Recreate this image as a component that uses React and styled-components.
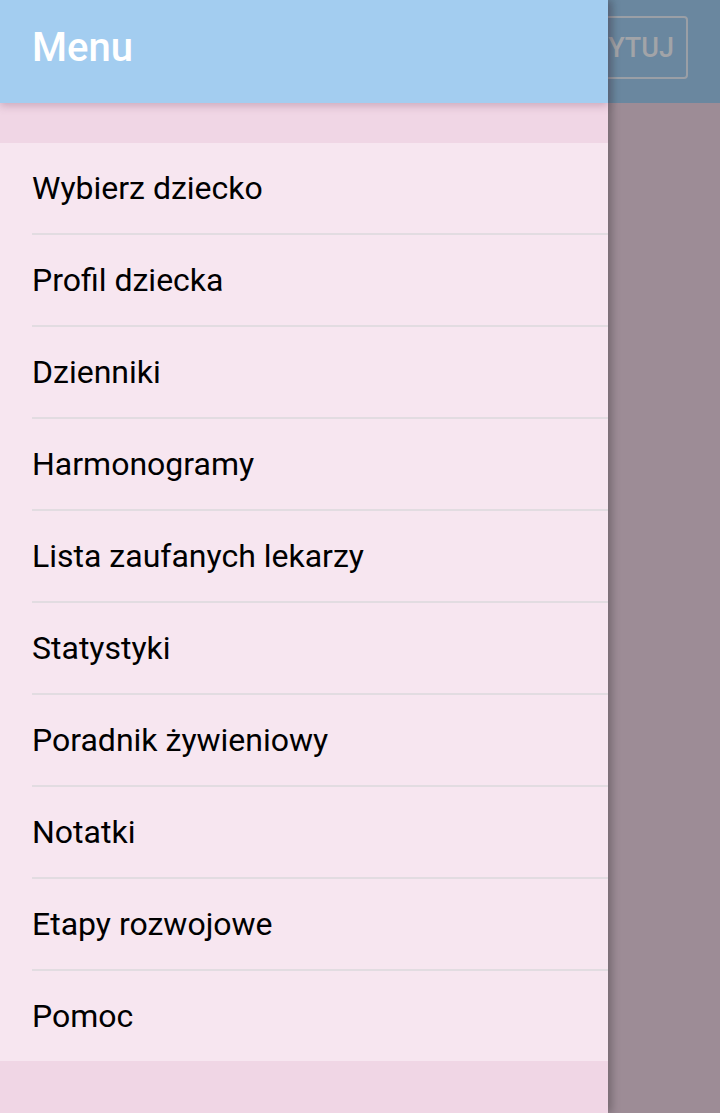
import React from 'react';
import styled, { createGlobalStyle } from 'styled-components';

const items = [
  'Wybierz dziecko',
  'Profil dziecka',
  'Dzienniki',
  'Harmonogramy',
  'Lista zaufanych lekarzy',
  'Statystyki',
  'Poradnik żywieniowy',
  'Notatki',
  'Etapy rozwojowe',
  'Pomoc',
];

const GlobalStyle = createGlobalStyle`
  html, body {
    margin: 0;
    padding: 0;
    height: 100%;
  }
  body {
    font-family: Roboto, "Noto Sans", sans-serif;
    overflow: hidden;
  }
  #root {
    height: 100%;
  }
`;

const Screen = styled.div`
  width: 720px;
  height: 1113px;
  position: relative;
  overflow: hidden;
`;

// page under the drawer, already dimmed by the scrim
const Page = styled.div`
  height: 100%;
  display: flex;
  flex-direction: column;
  background-color: #9d8c96;
`;

const AppBar = styled.div`
  height: 103px;
  background-color: #6a879f;
  display: flex;
  align-items: center;
  justify-content: flex-end;
  padding-right: 32px;
`;

const EditButton = styled.div`
  height: 63px;
  margin-top: -8px;
  padding: 0 12px;
  border: 2px solid #9a9fa6;
  border-radius: 4px;
  box-sizing: border-box;
  display: flex;
  align-items: center;
  color: #a2a4a8;
  font-size: 27px;
  font-weight: 500;
`;

const Drawer = styled.nav`
  position: absolute;
  top: 0;
  left: 0;
  bottom: 0;
  width: 608px;
  display: flex;
  flex-direction: column;
  background-color: #f0d6e5;
  box-shadow: 4px 0 8px rgba(0, 0, 0, 0.25);
`;

const DrawerHeader = styled.header`
  height: 103px;
  display: flex;
  align-items: center;
  padding: 0 32px;
  box-sizing: border-box;
  background-color: #a3cdf0;
  box-shadow: 0 3px 8px rgba(120, 70, 100, 0.3);
  position: relative;
  z-index: 1;

  h1 {
    margin: 0 0 8px;
    color: #fff;
    font-size: 40px;
    font-weight: 500;
  }
`;

const List = styled.ul`
  list-style: none;
  margin: 40px 0 0;
  padding: 0;
  background-color: #f7e6f0;
`;

const Item = styled.li`
  height: 90px;
  display: flex;
  align-items: center;
  padding-left: 32px;
  font-size: 32px;
  color: #000;

  & + & {
    border-top: 2px solid #e2dce1;
    margin-left: 32px;
    padding-left: 0;
  }
`;

const App = () => (
  <>
    <GlobalStyle />
    <Screen>
      <Page>
        <AppBar>
          <EditButton>EDYTUJ</EditButton>
        </AppBar>
      </Page>
      <Drawer>
        <DrawerHeader>
          <h1>Menu</h1>
        </DrawerHeader>
        <List>
          {items.map((label) => (
            <Item key={label}>{label}</Item>
          ))}
        </List>
      </Drawer>
    </Screen>
  </>
);

export default App;
